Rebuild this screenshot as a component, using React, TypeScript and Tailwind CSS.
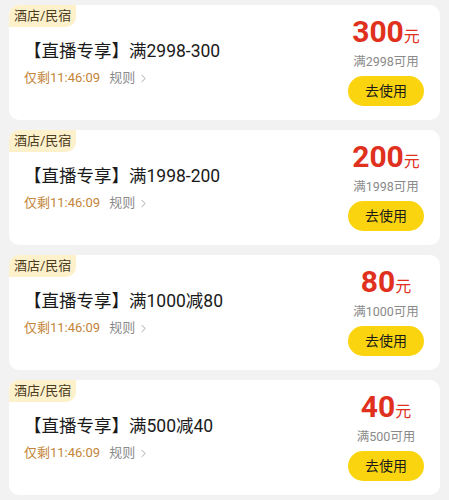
import { ChevronRight } from "lucide-react";

type Coupon = {
  title: string;
  amount: string;
  limit: string;
};

const coupons: Coupon[] = [
  { title: "【直播专享】满2998-300", amount: "300", limit: "满2998可用" },
  { title: "【直播专享】满1998-200", amount: "200", limit: "满1998可用" },
  { title: "【直播专享】满1000减80", amount: "80", limit: "满1000可用" },
  { title: "【直播专享】满500减40", amount: "40", limit: "满500可用" },
];

const CouponCard = ({ coupon }: { coupon: Coupon }) => {
  return (
    <div className="flex h-[115px] rounded-[10px] bg-white">
      <div className="flex flex-1 flex-col items-start">
        <span className="h-[22px] rounded-tl-[10px] rounded-br-[10px] bg-[#fdf1cc] px-[5px] text-[13px] leading-[22px] text-[#4a3a1e]">
          酒店/民宿
        </span>
        <div className="mt-[11px] pl-[15px] text-[17.5px] leading-[26px] text-[#1a1a1a]">
          {coupon.title}
        </div>
        <div className="mt-[4px] flex items-center pl-[15px] text-[13px] leading-[20px]">
          <span className="text-[#c48539]">仅剩11:46:09</span>
          <span className="ml-[9px] text-[#8a8a8a]">规则</span>
          <ChevronRight size={13} strokeWidth={1.6} className="ml-[2px] text-[#9a9a9a]" />
        </div>
      </div>
      <div className="mr-[13px] flex w-[80px] flex-col items-center pr-[2px] pt-[10px]">
        <div className="flex h-[34px] items-baseline leading-[34px]">
          <span className="text-[30px] font-bold text-[#e0301e]">{coupon.amount}</span>
          <span className="text-[16px] text-[#e0301e]">元</span>
        </div>
        <div className="mt-[4px] text-[12.5px] leading-[18px] text-[#8a8a8a]">{coupon.limit}</div>
        <button className="mt-[5px] h-[30px] w-[76px] rounded-full bg-[#fad50f] text-[14px] text-[#1a1a1a]">
          去使用
        </button>
      </div>
    </div>
  );
};

const App = () => {
  return (
    <div
      className="h-[500px] w-[449px] overflow-hidden bg-[#f2f2f2] px-[9px] pt-[5px]"
      style={{ fontFamily: 'Roboto, "Noto Sans CJK SC", sans-serif' }}
    >
      <div className="flex flex-col gap-[10px]">
        {coupons.map((c) => (
          <CouponCard key={c.amount} coupon={c} />
        ))}
      </div>
    </div>
  );
};

export default App;
